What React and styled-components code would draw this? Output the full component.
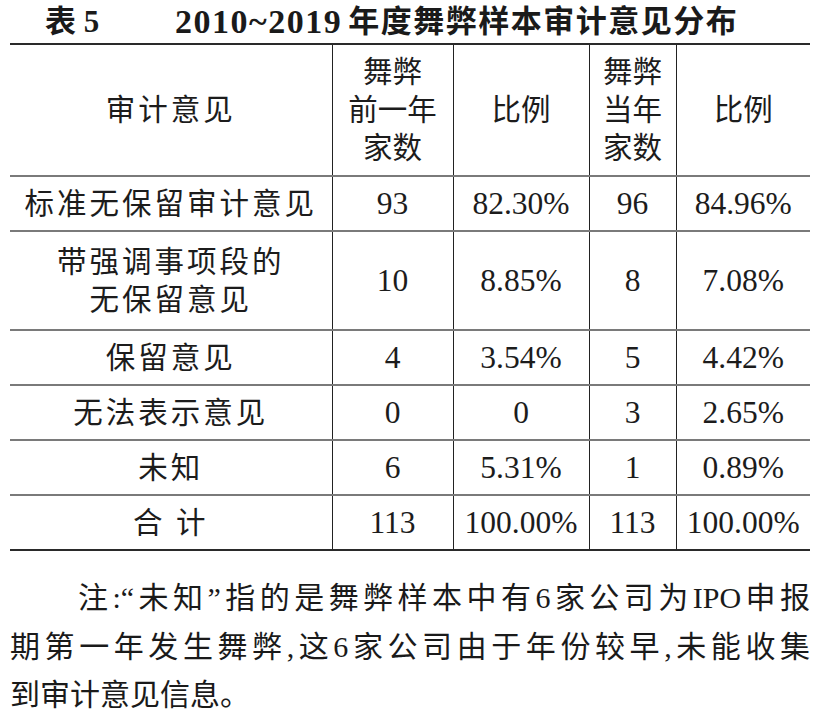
import React from 'react';
import styled, { createGlobalStyle } from 'styled-components';

const GlobalStyle = createGlobalStyle`
  html, body {
    margin: 0;
    padding: 0;
    background: #fff;
  }
  body {
    font-family: "Liberation Serif", "Noto Sans CJK SC", serif;
    color: #1c1c1c;
  }
`;

const Page = styled.div`
  width: 800px;
  padding: 0 12px 0 10px;
`;

const Caption = styled.div`
  display: flex;
  align-items: center;
  height: 43px;
  padding-left: 35px;
  font-weight: bold;
  font-size: 31px;
  line-height: 40px;
  color: #1a1a1a;
`;

const Label = styled.span`
  width: 130px;
  flex: none;
`;

const Years = styled.span`
  font-size: 34px;
  letter-spacing: 1.5px;
  margin-right: 6px;
`;

const Heading = styled.span`
  letter-spacing: 1.5px;
`;

const Table = styled.table`
  width: 800px;
  border-collapse: collapse;
  table-layout: fixed;
  border-top: 2.5px solid #2a2a2a;
  border-bottom: 2.5px solid #2a2a2a;
  font-size: 29.5px;

  tbody tr + tr td {
    border-top: 2px solid #7a7a7a;
  }
`;

const Row = styled.tr`
  height: ${(p) => p.$h}px;
`;

const Cell = styled.td`
  padding: 0;
  text-align: center;
  vertical-align: middle;
  line-height: 38px;
  border-left: ${(p) => (p.$first ? 'none' : '1.5px solid #222')};
  letter-spacing: ${(p) => (p.$first ? 3 : 0)}px;
  font-size: ${(p) => (p.$num ? 31.5 : 29.5)}px;
  white-space: nowrap;
`;

const Note = styled.div`
  margin-top: 23px;
  font-size: 30px;
  line-height: 48.5px;
  color: #1a1a1a;
`;

const NoteLine = styled.div`
  text-align: ${(p) => (p.$last ? 'left' : 'justify')};
  text-align-last: ${(p) => (p.$last ? 'left' : 'justify')};
  text-justify: inter-character;
  padding-left: ${(p) => (p.$indent ? 68 : 0)}px;
  white-space: nowrap;
`;

const rows = [
  { label: '标准无保留审计意见', a: '93', b: '82.30%', c: '96', d: '84.96%', h: 55 },
  { label: ['带强调事项段的', '无保留意见'], a: '10', b: '8.85%', c: '8', d: '7.08%', h: 99 },
  { label: '保留意见', a: '4', b: '3.54%', c: '5', d: '4.42%', h: 55 },
  { label: '无法表示意见', a: '0', b: '0', c: '3', d: '2.65%', h: 55 },
  { label: '未知', a: '6', b: '5.31%', c: '1', d: '0.89%', h: 55 },
  { label: '合 计', a: '113', b: '100.00%', c: '113', d: '100.00%', h: 55 },
];

function Lines({ items }) {
  return items.map((t, i) => (
    <React.Fragment key={i}>
      {i > 0 && <br />}
      {t}
    </React.Fragment>
  ));
}

export default function App() {
  return (
    <Page>
      <GlobalStyle />
      <Caption>
        <Label>表 5</Label>
        <Years>2010~2019</Years>
        <Heading>年度舞弊样本审计意见分布</Heading>
      </Caption>
      <Table>
        <colgroup>
          <col style={{ width: 322 }} />
          <col style={{ width: 121 }} />
          <col style={{ width: 136 }} />
          <col style={{ width: 87 }} />
          <col style={{ width: 134 }} />
        </colgroup>
        <tbody>
          <Row $h={132}>
            <Cell $first>审计意见</Cell>
            <Cell><Lines items={['舞弊', '前一年', '家数']} /></Cell>
            <Cell>比例</Cell>
            <Cell><Lines items={['舞弊', '当年', '家数']} /></Cell>
            <Cell>比例</Cell>
          </Row>
          {rows.map((r, i) => (
            <Row key={i} $h={r.h}>
              <Cell $first>
                {Array.isArray(r.label) ? <Lines items={r.label} /> : r.label}
              </Cell>
              <Cell $num>{r.a}</Cell>
              <Cell $num>{r.b}</Cell>
              <Cell $num>{r.c}</Cell>
              <Cell $num>{r.d}</Cell>
            </Row>
          ))}
        </tbody>
      </Table>
      <Note>
        <NoteLine $indent>注:“未知”指的是舞弊样本中有6家公司为IPO申报</NoteLine>
        <NoteLine>期第一年发生舞弊,这6家公司由于年份较早,未能收集</NoteLine>
        <NoteLine $last>到审计意见信息。</NoteLine>
      </Note>
    </Page>
  );
}
